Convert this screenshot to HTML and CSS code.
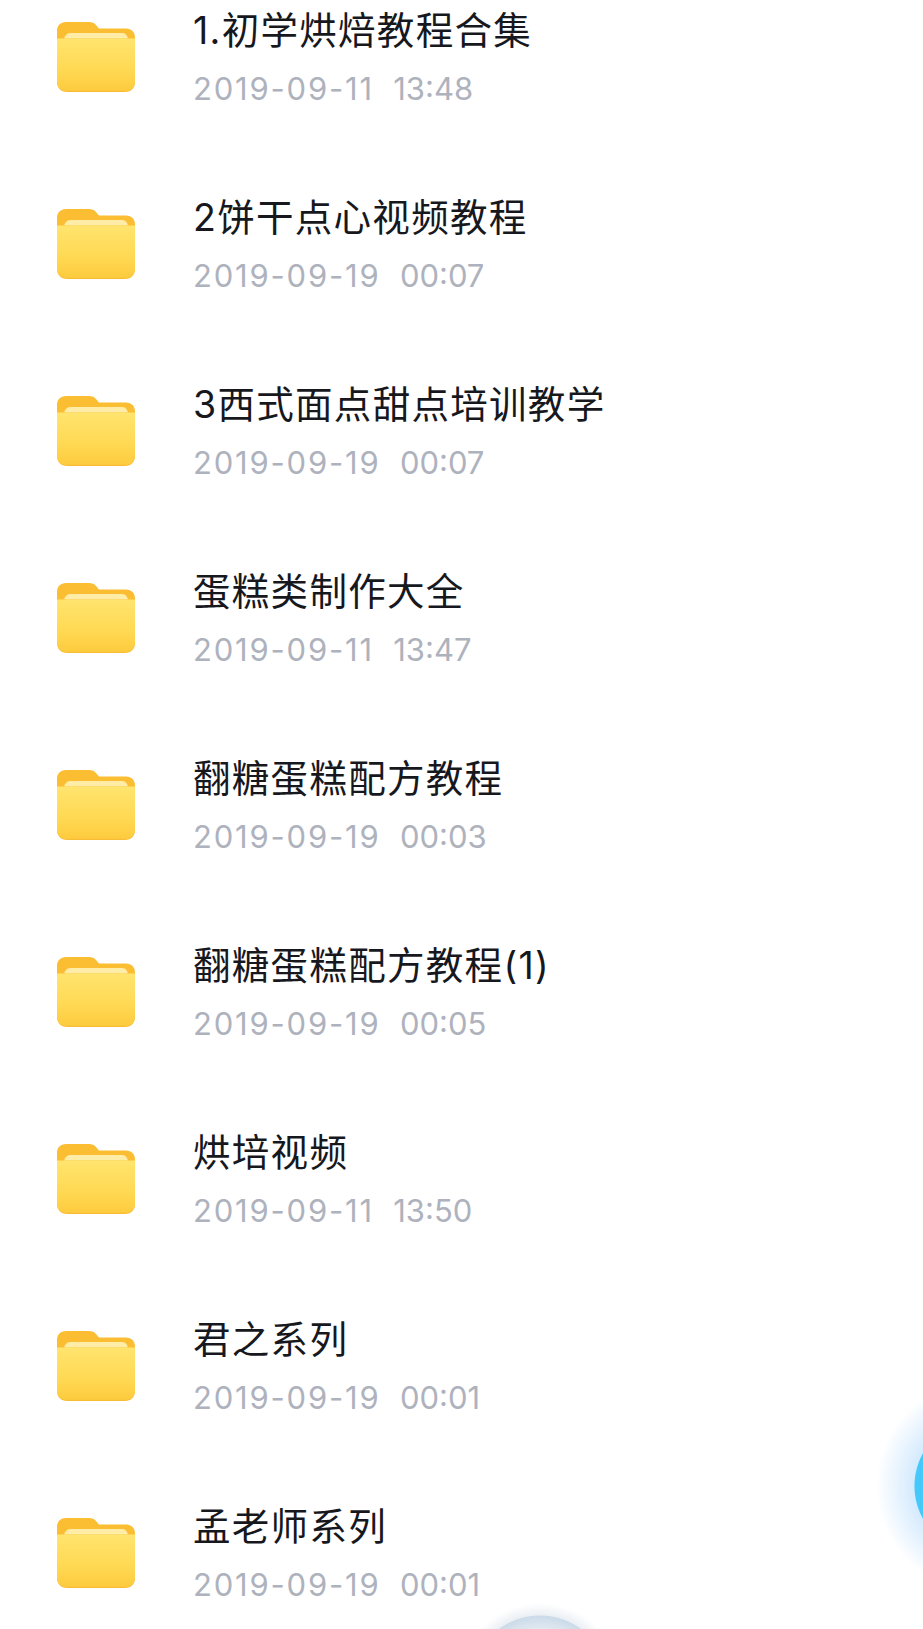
FILE: index.html
```html
<!DOCTYPE html>
<html lang="zh-CN">
<head>
  <meta charset="UTF-8">
  <meta name="viewport" content="width=device-width, initial-scale=1.0">
  <title>文件列表</title>
  <link rel="stylesheet" href="styles.css">
</head>
<body>

<svg class="defs" width="0" height="0">
  <defs>
    <linearGradient id="folderFront" x1="0" y1="0" x2="0" y2="1">
      <stop offset="0" stop-color="#ffe46e"/>
      <stop offset="0.6" stop-color="#ffd953"/>
      <stop offset="1" stop-color="#fdcb3e"/>
    </linearGradient>
    <symbol id="folder" viewBox="0 0 78 70">
      <path d="M0 9C0 3.500 3.500 0 9 0H32C35 0 37 .8 39 3L42 6.500H69C74.500 6.500 78 10 78 15.500V40H0Z" fill="#fbbd32"/>
      <path d="M7 22V18.500C7 14.500 9.500 11 13.500 11H65C69 11 71 14.500 71 18.500V22Z" fill="#ffeca6"/>
      <path d="M0 16.500H78V60C78 66 74 70 68 70H10C4 70 0 66 0 60Z" fill="#f8bd35"/>
      <path d="M0 16.500H78V59.500C78 65.500 74 68.800 68 68.800H10C4 68.800 0 65.500 0 59.500Z" fill="url(#folderFront)"/>
    </symbol>
  </defs>
</svg>

<div class="file-list">
  <div class="file-row">
    <svg class="folder"><use href="#folder"/></svg>
    <div class="file-info">
      <div class="file-name">1.初学烘焙教程合集</div>
      <div class="file-date"><span class="day">2019-09-11</span>&nbsp;&nbsp;13:48</div>
    </div>
  </div>
  <div class="file-row">
    <svg class="folder"><use href="#folder"/></svg>
    <div class="file-info">
      <div class="file-name">2饼干点心视频教程</div>
      <div class="file-date"><span class="day">2019-09-19</span>&nbsp;&nbsp;00:07</div>
    </div>
  </div>
  <div class="file-row">
    <svg class="folder"><use href="#folder"/></svg>
    <div class="file-info">
      <div class="file-name">3西式面点甜点培训教学</div>
      <div class="file-date"><span class="day">2019-09-19</span>&nbsp;&nbsp;00:07</div>
    </div>
  </div>
  <div class="file-row">
    <svg class="folder"><use href="#folder"/></svg>
    <div class="file-info">
      <div class="file-name">蛋糕类制作大全</div>
      <div class="file-date"><span class="day">2019-09-11</span>&nbsp;&nbsp;13:47</div>
    </div>
  </div>
  <div class="file-row">
    <svg class="folder"><use href="#folder"/></svg>
    <div class="file-info">
      <div class="file-name">翻糖蛋糕配方教程</div>
      <div class="file-date"><span class="day">2019-09-19</span>&nbsp;&nbsp;00:03</div>
    </div>
  </div>
  <div class="file-row">
    <svg class="folder"><use href="#folder"/></svg>
    <div class="file-info">
      <div class="file-name">翻糖蛋糕配方教程(1)</div>
      <div class="file-date"><span class="day">2019-09-19</span>&nbsp;&nbsp;00:05</div>
    </div>
  </div>
  <div class="file-row">
    <svg class="folder"><use href="#folder"/></svg>
    <div class="file-info">
      <div class="file-name">烘培视频</div>
      <div class="file-date"><span class="day">2019-09-11</span>&nbsp;&nbsp;13:50</div>
    </div>
  </div>
  <div class="file-row">
    <svg class="folder"><use href="#folder"/></svg>
    <div class="file-info">
      <div class="file-name">君之系列</div>
      <div class="file-date"><span class="day">2019-09-19</span>&nbsp;&nbsp;00:01</div>
    </div>
  </div>
  <div class="file-row">
    <svg class="folder"><use href="#folder"/></svg>
    <div class="file-info">
      <div class="file-name">孟老师系列</div>
      <div class="file-date"><span class="day">2019-09-19</span>&nbsp;&nbsp;00:01</div>
    </div>
  </div>
</div>

<div class="fab-side"></div>
<div class="fab-bottom"></div>

</body>
</html>
```

FILE: styles.css
```css
html, body {
  height: 100%;
}
body {
  margin: 0;
  position: relative;
  overflow: hidden;
  background: #fff;
  color: #16181d;
  font-family: Inter, "Noto Sans CJK SC", sans-serif;
}
.defs {
  position: absolute;
}
.file-list {
  height: 1629px;
  overflow: hidden;
  padding-top: 8px;
  box-sizing: border-box;
}
.file-row {
  display: flex;
  align-items: center;
  gap: 58px;
  height: 96px;
  padding: 0 0 91px 57px;
}
.folder {
  flex: none;
  width: 78px;
  height: 70px;
  margin-top: 1px;
}
.file-info {
  display: flex;
  flex-direction: column;
  gap: 16px;
  margin-top: 2px;
}
.file-name {
  font-size: 37.5px;
  line-height: 48px;
  letter-spacing: 1.3px;
}
.file-date {
  font-size: 31px;
  line-height: 36px;
  color: #aeb2bd;
}
.day {
  letter-spacing: 1.8px;
  margin-right: 2px;
}
/* floating buttons, cut off by the screen edge */
.fab-side {
  position: absolute;
  right: 0;
  top: 1388px;
  width: 90px;
  height: 196px;
  background:
    radial-gradient(circle at 149px 98px, #45c8fa 67px, transparent 68px),
    radial-gradient(circle at 149px 98px, rgba(110, 185, 250, 0.3) 67px, transparent 106px);
}
.fab-bottom {
  position: absolute;
  left: 440px;
  bottom: 0;
  width: 200px;
  height: 40px;
  background:
    radial-gradient(circle at 100px 96px, #e1e9f1 56px, #cbdbe9 69px, transparent 70px),
    radial-gradient(circle at 100px 96px, rgba(190, 205, 220, 0.3) 70px, transparent 82px);
}
```
